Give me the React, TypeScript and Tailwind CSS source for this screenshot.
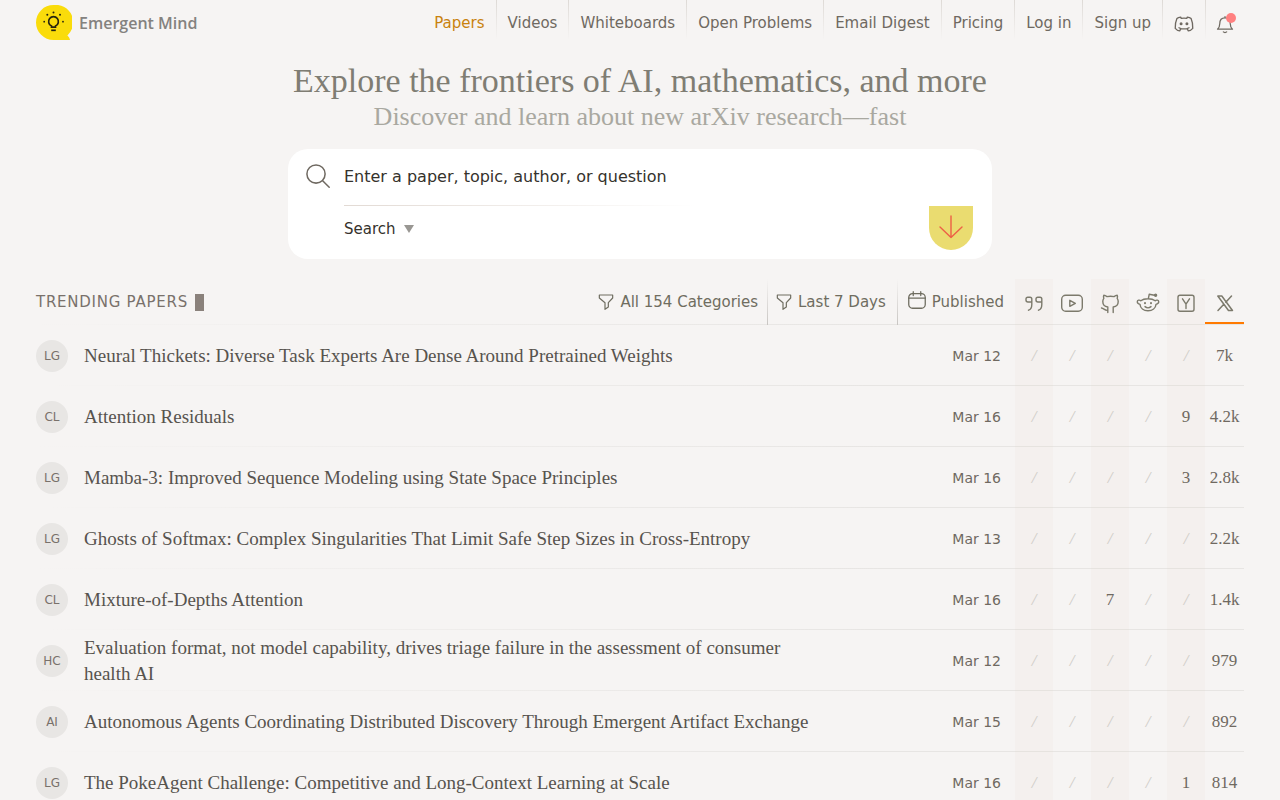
import { ReactNode } from "react";

const NAV_LINKS = [
  "Papers",
  "Videos",
  "Whiteboards",
  "Open Problems",
  "Email Digest",
  "Pricing",
  "Log in",
  "Sign up",
];

interface Paper {
  tag: string;
  title: string;
  date: string;
  // quotes, youtube, github, reddit, hacker news, x
  counts: string[];
}

const PAPERS: Paper[] = [
  {
    tag: "LG",
    title: "Neural Thickets: Diverse Task Experts Are Dense Around Pretrained Weights",
    date: "Mar 12",
    counts: ["", "", "", "", "", "7k"],
  },
  {
    tag: "CL",
    title: "Attention Residuals",
    date: "Mar 16",
    counts: ["", "", "", "", "9", "4.2k"],
  },
  {
    tag: "LG",
    title: "Mamba-3: Improved Sequence Modeling using State Space Principles",
    date: "Mar 16",
    counts: ["", "", "", "", "3", "2.8k"],
  },
  {
    tag: "LG",
    title: "Ghosts of Softmax: Complex Singularities That Limit Safe Step Sizes in Cross-Entropy",
    date: "Mar 13",
    counts: ["", "", "", "", "", "2.2k"],
  },
  {
    tag: "CL",
    title: "Mixture-of-Depths Attention",
    date: "Mar 16",
    counts: ["", "", "7", "", "", "1.4k"],
  },
  {
    tag: "HC",
    title:
      "Evaluation format, not model capability, drives triage failure in the assessment of consumer health AI",
    date: "Mar 12",
    counts: ["", "", "", "", "", "979"],
  },
  {
    tag: "AI",
    title: "Autonomous Agents Coordinating Distributed Discovery Through Emergent Artifact Exchange",
    date: "Mar 15",
    counts: ["", "", "", "", "", "892"],
  },
  {
    tag: "LG",
    title: "The PokeAgent Challenge: Competitive and Long-Context Learning at Scale",
    date: "Mar 16",
    counts: ["", "", "", "", "1", "814"],
  },
];

interface IconProps {
  className?: string;
  strokeWidth?: number;
  children: ReactNode;
}

function Icon({ className = "size-6", strokeWidth = 1.4, children }: IconProps) {
  return (
    <svg
      viewBox="0 0 24 24"
      fill="none"
      stroke="currentColor"
      strokeWidth={strokeWidth}
      strokeLinecap="round"
      strokeLinejoin="round"
      aria-hidden="true"
      className={`shrink-0 ${className}`}>
      {children}
    </svg>
  );
}

function Logo() {
  return (
    <svg viewBox="0 0 36 36" className="size-9 shrink-0" aria-hidden="true">
      <path
        d="M17.5 0a17.5 17.5 0 1 0 0 35H34c-.2-2-1.300-3.400-2.600-4.600A17.500 17.500 0 0 0 17.500 0Z"
        fill="#fadc0b"
      />
      <g fill="none" stroke="#27250f" strokeWidth="1.7">
        <path d="M15.500 22.200v-1.200a4.900 4.900 0 1 1 4 0v1.200Z" />
        <path d="M15.200 25.300h4.600" />
      </g>
      <g fill="#27250f">
        <circle cx="8.200" cy="16.700" r=".9" />
        <circle cx="11.300" cy="9.800" r="1" />
        <circle cx="17.500" cy="7.500" r="1" />
        <circle cx="24" cy="9.800" r="1" />
        <circle cx="27" cy="16.700" r=".9" />
      </g>
    </svg>
  );
}

function FilterIcon() {
  return (
    <Icon className="size-4" strokeWidth={1.8}>
      <path d="M2 1.500h20v4.500l-6.500 7v6.500L10.500 23v-10L2 6Z" />
    </Icon>
  );
}

function CalendarIcon() {
  return (
    <Icon className="mb-1 size-[18px]" strokeWidth={1.7}>
      <rect x="1" y="3.500" width="22" height="19.500" rx="5" />
      <path d="M1 9.500h22M7 1v5M17 1v5" />
    </Icon>
  );
}

const METRICS: { label: string; icon: ReactNode }[] = [
  {
    label: "Citations",
    icon: (
      <Icon>
        <path d="M9.800 11H6a2 2 0 0 1-2-2V8a1.800 1.800 0 0 1 1.800-1.800H8A1.800 1.800 0 0 1 9.800 8v5.500c0 3.300-1 5-3.300 5.700M19.800 11H16a2 2 0 0 1-2-2V8a1.800 1.800 0 0 1 1.800-1.800H18A1.800 1.800 0 0 1 19.800 8v5.500c0 3.300-1 5-3.300 5.700" />
      </Icon>
    ),
  },
  {
    label: "YouTube",
    icon: (
      <Icon>
        <rect x="1.700" y="4.300" width="20.600" height="16" rx="4" />
        <path d="M9.800 9.300v6l5.500-3Z" />
      </Icon>
    ),
  },
  {
    label: "GitHub",
    icon: (
      <Icon>
        <path d="M9.800 21.500V16c-3-.3-5-2.200-5-5.500 0-1.400.4-2.400 1-3.200-.5-1-.4-2 0-3 1.300.1 2.300.7 3.200 1.300 2.200-.5 4.800-.5 7 0 .9-.6 1.900-1.200 3.200-1.300.4 1 .5 2 0 3 .6.8 1 1.800 1 3.200 0 3.300-2 5.200-5 5.500v5.500M9.800 19.300c-3 .5-3.800-1.800-6.300-2.300" />
      </Icon>
    ),
  },
  {
    label: "Reddit",
    icon: (
      <Icon>
        <path d="M4.800 9.800C6.500 8.400 9.200 7.800 12 7.800s5.500.6 7.200 2c1.300-1.300 3.500-.7 3.500 1 0 1.300-1 2.200-2.700 2.600-.3 3.700-3.500 6.400-8 6.400s-7.700-2.700-8-6.400c-1.700-.4-2.700-1.300-2.700-2.600 0-1.700 2.200-2.300 3.500-1ZM12.300 7.800l.9-4.500 5.300.9M9 15.600c1.800 1.500 4.200 1.500 6 0" />
        <circle cx="19.600" cy="4.200" r="1" fill="currentColor" />
        <path d="M9 12v.3M15 12v.3" strokeWidth="2" />
      </Icon>
    ),
  },
  {
    label: "Hacker News",
    icon: (
      <Icon>
        <rect x="4" y="4.300" width="16" height="16" rx="2" />
        <path d="m8.500 7.800 3.500 5.400 3.500-5.400M12 13.200v4.300" />
      </Icon>
    ),
  },
  {
    label: "X",
    icon: (
      <Icon strokeWidth={1.5}>
        <path d="M4.800 5h4L19.500 19.500h-4ZM18.500 5l-5.700 6.200M10.800 13.300 5 19.500" />
      </Icon>
    ),
  },
];

function NavDivider() {
  return <div className="h-10 w-px bg-linear-to-b from-[#dedad6] to-transparent" />;
}

function SiteHeader() {
  return (
    <header className="flex justify-between px-9">
      <a href="#" className="flex items-center gap-[7px] pt-[2px]">
        <Logo />
        <span className="font-['Open_Sans','Noto_Sans',sans-serif] text-base font-semibold text-[#84827f]">
          Emergent Mind
        </span>
      </a>
      <nav className="flex h-11">
        {NAV_LINKS.map((link, i) => (
          <div key={link} className="flex">
            {i > 0 && <NavDivider />}
            <a
              href="#"
              className={`flex items-center px-[11px] pt-[2px] text-[15px] ${
                i === 0 ? "text-[#c9820e]" : "text-[#6f6961]"
              }`}>
              {link}
            </a>
          </div>
        ))}
        <NavDivider />
        <a href="#" aria-label="Discord" className="flex items-center px-[11px] pt-1 text-[#6f6961]">
          <Icon className="size-5" strokeWidth={1.6}>
            <path d="M8 3.800C6 4 4.500 4.600 3.500 5.500 2 9 1.200 13 1.500 17.300c1.500 1.800 3.500 3 5.300 3l1.500-2.800c2.400.5 5 .5 7.400 0l1.500 2.800c1.800 0 3.800-1.200 5.300-3 .3-4.300-.5-8.300-2-11.800-1-.9-2.500-1.500-4.500-1.700l-.7 1.400c-2.200-.4-4.400-.4-6.600 0ZM6 16.500l2.300 1M18 16.500l-2.300 1" />
            <circle cx="8.500" cy="11.800" r="1" fill="currentColor" />
            <circle cx="15.500" cy="11.800" r="1" fill="currentColor" />
          </Icon>
        </a>
        <NavDivider />
        <button
          type="button"
          aria-label="Notifications"
          className="relative flex items-center pt-1 pr-[9px] pl-[9px] text-[#6f6961]">
          <Icon className="size-5" strokeWidth={1.5}>
            <path d="M3 18.200h18c-1.800-1.500-2.700-3.500-2.700-6.500 0-4-2-7-6.300-7s-6.300 3-6.300 7c0 3-.9 5-2.700 6.500ZM12 4.700V3M10 21.500c1 1 3 1 4 0" />
          </Icon>
          <span className="absolute top-[13px] right-2 size-[10px] rounded-full bg-[#ff8080]" />
        </button>
      </nav>
    </header>
  );
}

function SearchBox() {
  return (
    <form className="mx-auto mt-4 flex w-full max-w-[704px] rounded-[20px] bg-white pl-4">
      <label htmlFor="query" className="w-10 pt-[13px] text-[#6f6961]">
        <Icon className="size-7" strokeWidth={1.3}>
          <circle cx="10.300" cy="10.300" r="7.800" />
          <path d="m16 16 5.600 5.600" />
        </Icon>
      </label>
      <div className="min-w-0 flex-1">
        <input
          id="query"
          type="text"
          aria-label="Search papers"
          placeholder="Enter a paper, topic, author, or question"
          className="block h-14 w-full pb-[2px] text-base text-[#35322c] outline-none placeholder:text-[#35322c]"
        />
        <div className="h-px w-[352px] bg-linear-to-r from-[#e2dad4] to-transparent" />
        <div className="flex h-[53px] items-center pb-[6px]">
          <select
            aria-label="Mode"
            className="w-[60px] appearance-none text-[15px] text-[#35322c] outline-none">
            <option>Search</option>
          </select>
          <svg viewBox="0 0 10 8" className="mb-[2px] h-2 w-[10px]" aria-hidden="true">
            <path d="M0 0h10L5 8Z" fill="#999793" />
          </svg>
        </div>
      </div>
      <button
        type="submit"
        aria-label="Submit"
        className="mt-[57px] mr-[19px] mb-[9px] flex size-11 items-center justify-center rounded-b-full bg-[#eadc70] pb-[2px] text-[#ed6046]">
        <Icon className="size-6" strokeWidth={1.4}>
          <path d="M12 1v21.500M1 12l11 10.500L23 12" />
        </Icon>
      </button>
    </form>
  );
}

export default function App() {
  return (
    <div className="h-screen overflow-hidden bg-[#f6f4f3] font-['DejaVu_Sans',Verdana,sans-serif]">
      <SiteHeader />
      <main className="px-9">
        <section className="pt-[17px] text-center font-['Liberation_Serif',serif]">
          <h1 className="text-[34px] leading-10 text-[#7f7d73]">
            Explore the frontiers of AI, mathematics, and more
          </h1>
          <p className="text-[26px] leading-8 text-[#a9a8a0]">
            Discover and learn about new arXiv research—fast
          </p>
        </section>
        <SearchBox />
        <table className="mt-5 w-full table-fixed border-collapse">
          <colgroup>
            <col className="w-12" />
            <col />
            <col className="w-[170px]" />
            <col className="w-[38px]" />
            <col className="w-[38px]" />
            <col className="w-[38px]" />
            <col className="w-[38px]" />
            <col className="w-[38px]" />
            <col className="w-[39px]" />
          </colgroup>
          <thead>
            <tr className="h-[46px] bg-[linear-gradient(to_right,transparent,#e7e5e3_70%)] bg-[length:100%_1px] bg-bottom bg-no-repeat text-[15px] text-[#6f6d60]">
              <th colSpan={3} className="p-0 font-normal">
                <div className="flex h-[46px] justify-between">
                  <h2 className="flex items-center gap-[7px] tracking-wider text-[#79716b]">
                    TRENDING PAPERS
                    <span className="h-[17px] w-[9px] bg-[#8a817b]" />
                  </h2>
                  <div className="flex">
                    <button type="button" className="flex items-center gap-[6px] pr-[9px]">
                      <FilterIcon />
                      All 154 Categories
                    </button>
                    <div className="w-px bg-linear-to-b from-transparent to-[#c8c5c2]" />
                    <button type="button" className="flex items-center gap-[6px] pr-[11px] pl-2">
                      <FilterIcon />
                      Last 7 Days
                    </button>
                    <div className="w-px bg-linear-to-b from-transparent to-[#c8c5c2]" />
                    <button type="button" className="flex items-center gap-[6px] pr-[11px] pl-[10px]">
                      <CalendarIcon />
                      Published
                    </button>
                  </div>
                </div>
              </th>
              {METRICS.map(({ label, icon }, i) => (
                <th key={label} className={`p-0 align-top ${i % 2 === 0 ? "bg-[#e6c8b8]/8" : ""}`}>
                  <button
                    type="button"
                    aria-label={label}
                    className={`flex h-[45px] w-full items-center justify-center border-b-2 pt-1 text-[#7c7a6c] ${
                      i === 5 ? "border-[#ff7a00]" : "border-transparent"
                    }`}>
                    {icon}
                  </button>
                </th>
              ))}
            </tr>
          </thead>
          <tbody>
            {PAPERS.map((paper) => (
              <tr
                key={paper.title}
                className="h-[61px] bg-[linear-gradient(to_right,transparent,#e7e5e3_70%)] bg-[length:100%_1px] bg-bottom bg-no-repeat">
                <td className="p-0">
                  <span className="flex size-8 items-center justify-center rounded-full bg-[#e8e6e4] text-xs text-[#79716b]">
                    {paper.tag}
                  </span>
                </td>
                <td className="p-0 font-['Liberation_Serif',serif] text-[19px] leading-[26px] text-[#57534e]">
                  <a href="#" className="block max-w-[740px]">
                    {paper.title}
                  </a>
                </td>
                <td className="p-0 pr-[14px] text-right text-sm text-[#6f6961]">{paper.date}</td>
                {paper.counts.map((count, i) => (
                  <td
                    key={i}
                    className={`p-0 text-center font-['Liberation_Serif',serif] text-[17px] ${
                      i % 2 === 0 ? "bg-[#e6c8b8]/8" : ""
                    } ${count ? "text-[#6f6961]" : "text-[#cfccc7] italic"}`}>
                    {count || "/"}
                  </td>
                ))}
              </tr>
            ))}
          </tbody>
        </table>
      </main>
    </div>
  );
}
